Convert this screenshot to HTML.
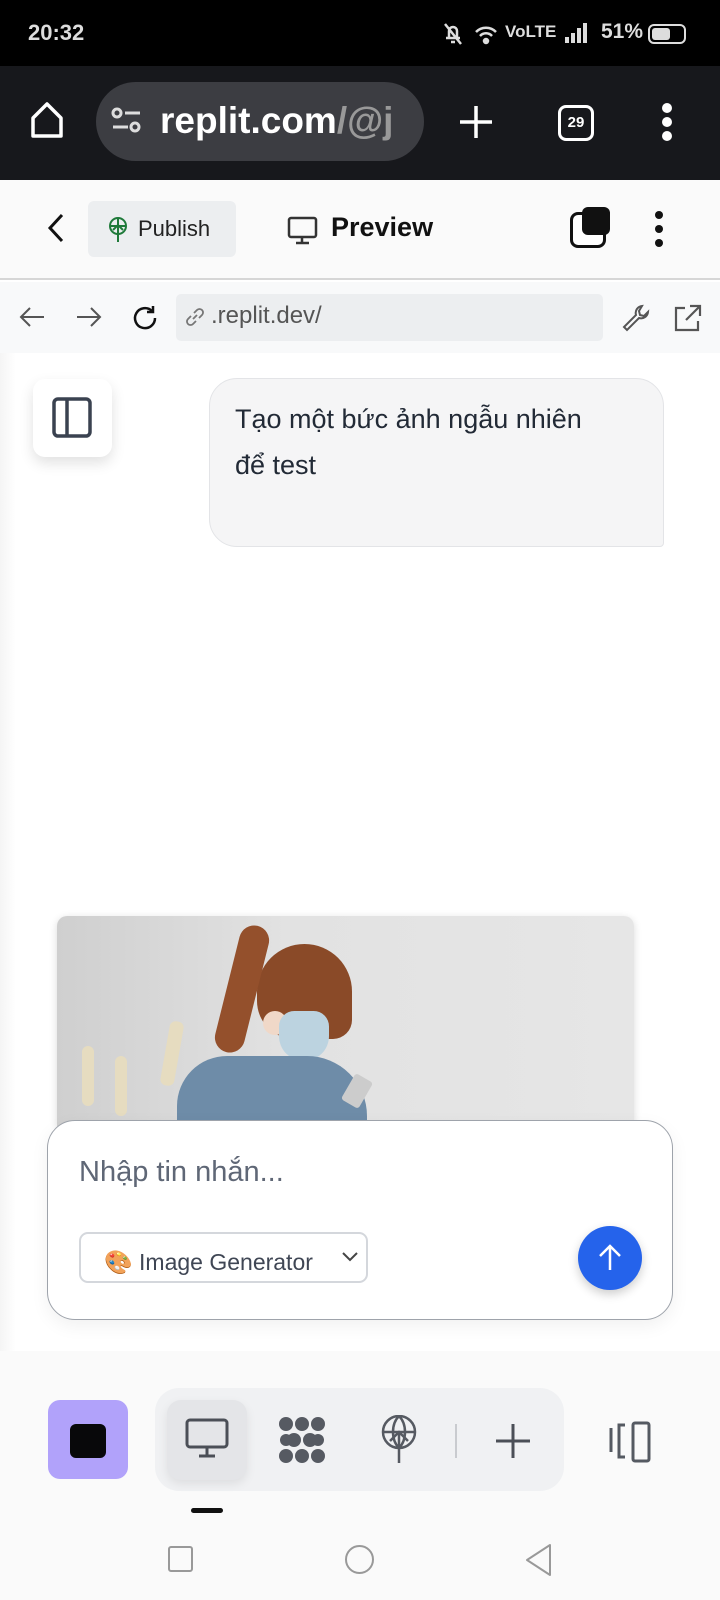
<!DOCTYPE html>
<html><head><meta charset="utf-8"><style>
*{margin:0;padding:0;box-sizing:border-box}
body{width:720px;height:1600px;position:relative;overflow:hidden;background:#fff;font-family:"Liberation Sans",sans-serif}
.a{position:absolute}
</style></head><body>
<!-- status bar -->
<div class="a" style="left:0;top:0;width:720px;height:66px;background:#000"></div>
<div class="a" style="left:28px;top:20px;color:#ddd;font-weight:bold;font-size:22px">20:32</div>
<div class="a" style="left:505px;top:22px;color:#ddd;font-weight:bold;font-size:17px">VoLTE</div>
<div class="a" style="left:601px;top:20px;color:#ddd;font-weight:bold;font-size:21px">51%</div>
<div class="a" style="left:648px;top:24px;width:38px;height:20px;border:2px solid #ddd;border-radius:6px"><div style="margin:2px;width:18px;height:12px;background:#ddd;border-radius:3px"></div></div>
<svg class="a" style="left:440px;top:20px" width="120" height="28" fill="none" stroke="#ddd" stroke-width="2.5"><path d="M6 18h14M9 18v-7a4 4 0 0 1 8 0v7M5 4l16 20M11 22h4"/><path d="M36 12a14 14 0 0 1 20 0M40 16a8 8 0 0 1 12 0"/><circle cx="46" cy="21" r="2" fill="#ddd"/></svg>
<svg class="a" style="left:565px;top:22px" width="30" height="22" fill="#ddd"><rect x="0" y="15" width="4" height="6"/><rect x="6" y="11" width="4" height="10"/><rect x="12" y="6" width="4" height="15"/><rect x="18" y="1" width="4" height="20"/></svg>
<!-- browser toolbar -->
<div class="a" style="left:0;top:66px;width:720px;height:114px;background:#17181c"></div>
<svg class="a" style="left:28px;top:100px" width="40" height="40" fill="none" stroke="#fff" stroke-width="3.5" stroke-linejoin="round"><path d="M5 18L19 4l14 14v18H5z"/></svg>
<div class="a" style="left:96px;top:82px;width:328px;height:79px;background:#3c3d42;border-radius:40px"></div>
<svg class="a" style="left:110px;top:106px" width="34" height="30" fill="none" stroke="#ddd" stroke-width="3"><circle cx="7" cy="7" r="4"/><path d="M15 7h15M3 21h15"/><circle cx="25" cy="21" r="4"/></svg>
<div class="a" style="left:160px;top:100px;color:#fff;font-weight:bold;font-size:37px;white-space:nowrap">replit.com<span style="color:#999">/@j</span></div>
<svg class="a" style="left:458px;top:104px" width="36" height="36" stroke="#fff" stroke-width="3.5"><path d="M18 2v32M2 18h32"/></svg>
<div class="a" style="left:558px;top:105px;width:36px;height:36px;border:3px solid #fff;border-radius:8px;color:#fff;font-size:15px;font-weight:bold;text-align:center;line-height:30px">29</div>
<svg class="a" style="left:660px;top:102px" width="14" height="40" fill="#fff"><circle cx="7" cy="6" r="5"/><circle cx="7" cy="20" r="5"/><circle cx="7" cy="34" r="5"/></svg>
<!-- publish bar -->
<div class="a" style="left:0;top:180px;width:720px;height:100px;background:#fafafa;border-bottom:2px solid #d6d6d6"></div>
<svg class="a" style="left:46px;top:212px" width="20" height="32" fill="none" stroke="#111" stroke-width="3"><path d="M16 3L4 16l12 13"/></svg>
<div class="a" style="left:88px;top:201px;width:148px;height:56px;background:#eceef0;border-radius:6px"></div>
<svg class="a" style="left:107px;top:216px" width="22" height="28" fill="none" stroke="#1f7a3a" stroke-width="2"><circle cx="11" cy="10" r="8"/><path d="M3 10h16M11 2v24M6 14l5-5 5 5"/></svg>
<div class="a" style="left:138px;top:216px;font-size:22px;color:#222">Publish</div>
<svg class="a" style="left:287px;top:216px" width="32" height="30" fill="none" stroke="#333" stroke-width="2.5"><rect x="2" y="2" width="27" height="19" rx="2"/><path d="M15 21v6M9 27h13"/></svg>
<div class="a" style="left:331px;top:212px;font-size:27px;color:#111;font-weight:bold">Preview</div>
<div class="a" style="left:570px;top:212px;width:36px;height:36px;border:3px solid #111;border-radius:8px;background:#fff"></div>
<div class="a" style="left:582px;top:207px;width:28px;height:28px;background:#111;border-radius:6px"></div>
<svg class="a" style="left:652px;top:210px" width="14" height="40" fill="#111"><circle cx="7" cy="5" r="4"/><circle cx="7" cy="19" r="4"/><circle cx="7" cy="33" r="4"/></svg>
<!-- browser row -->
<div class="a" style="left:0;top:282px;width:720px;height:71px;background:#f8f9fa"></div>
<svg class="a" style="left:18px;top:305px" width="28" height="24" fill="none" stroke="#555" stroke-width="2"><path d="M26 12H3M12 3l-9 9 9 9"/></svg>
<svg class="a" style="left:75px;top:305px" width="28" height="24" fill="none" stroke="#555" stroke-width="2"><path d="M2 12h23M16 3l9 9-9 9"/></svg>
<svg class="a" style="left:130px;top:303px" width="30" height="30" fill="none" stroke="#111" stroke-width="2.5"><path d="M25 15a10 10 0 1 1-3-7"/><path d="M23 3v6h-6"/></svg>
<div class="a" style="left:176px;top:294px;width:427px;height:47px;background:#eceef0;border-radius:5px"></div>
<svg class="a" style="left:183px;top:305px" width="24" height="24" fill="none" stroke="#777" stroke-width="1.8"><path d="M10 14l4-4M8 11l-3 3a3.5 3.5 0 0 0 5 5l3-3M16 13l3-3a3.5 3.5 0 0 0-5-5l-3 3"/></svg>
<div class="a" style="left:211px;top:302px;font-size:24px;color:#555">.replit.dev/</div>
<svg class="a" style="left:620px;top:302px" width="32" height="32" fill="none" stroke="#555" stroke-width="2"><path d="M22 4a7 7 0 0 0-6 9L4 25l3 3 12-12a7 7 0 0 0 9-6l-4 4-4-1-1-4z"/></svg>
<svg class="a" style="left:672px;top:302px" width="32" height="32" fill="none" stroke="#555" stroke-width="2.2"><path d="M13 6H4v22h22v-9M18 4h10v10M28 4L14 18"/></svg>
<!-- left shadow strip -->
<div class="a" style="left:0;top:353px;width:16px;height:998px;background:linear-gradient(90deg,#f5f5f5,#fff)"></div>
<!-- sidebar button -->
<div class="a" style="left:33px;top:379px;width:79px;height:78px;background:#fff;border-radius:12px;box-shadow:0 6px 14px rgba(0,0,0,.12)"></div>
<svg class="a" style="left:51px;top:396px" width="42" height="44" fill="none" stroke="#3a4250" stroke-width="3.5"><rect x="3" y="3" width="36" height="37" rx="4"/><path d="M16 3v37"/></svg>
<!-- bubble -->
<div class="a" style="left:209px;top:378px;width:455px;height:169px;background:#f5f5f6;border:1.5px solid #e3e4e7;border-radius:28px 28px 4px 28px"></div>
<div class="a" style="left:235px;top:396px;width:360px;font-size:27px;line-height:46px;color:#222a36">Tạo một bức ảnh ngẫu nhiên<br>để test</div>
<!-- image -->
<div class="a" style="left:57px;top:916px;width:577px;height:210px;border-radius:10px 10px 0 0;overflow:hidden;background:linear-gradient(90deg,#cfcfcf,#e2e2e2 40%,#e6e6e6);box-shadow:0 2px 8px rgba(0,0,0,.15)">
 <div class="a" style="left:200px;top:28px;width:95px;height:95px;background:#8a4a28;border-radius:50px 50px 20px 40px"></div>
 <div class="a" style="left:170px;top:8px;width:30px;height:130px;background:#94502c;border-radius:15px;transform:rotate(14deg)"></div>
 <div class="a" style="left:206px;top:95px;width:24px;height:24px;background:#f0d8c8;border-radius:50%"></div>
 <div class="a" style="left:222px;top:95px;width:50px;height:50px;background:#bcd3e0;border-radius:16px 16px 26px 26px"></div>
 <div class="a" style="left:120px;top:140px;width:190px;height:100px;background:#6e8ca8;border-radius:50px 60px 0 0"></div>
 <div class="a" style="left:290px;top:160px;width:20px;height:30px;background:#ccc;border-radius:3px;transform:rotate(30deg)"></div>
 <div class="a" style="left:25px;top:130px;width:12px;height:60px;background:#e6dcc0;border-radius:6px"></div>
 <div class="a" style="left:58px;top:140px;width:12px;height:60px;background:#e6dcc0;border-radius:6px"></div>
 <div class="a" style="left:108px;top:105px;width:14px;height:65px;background:#e6dcc0;border-radius:6px;transform:rotate(10deg)"></div>
</div>
<!-- input box -->
<div class="a" style="left:47px;top:1120px;width:626px;height:200px;background:#fff;border:1.5px solid #9ea3ab;border-radius:28px;box-shadow:0 6px 18px rgba(0,0,0,.06)"></div>
<div class="a" style="left:79px;top:1156px;font-size:29px;color:#5f6776">Nhập tin nhắn...</div>
<div class="a" style="left:79px;top:1232px;width:289px;height:51px;border:2px solid #d4d7dc;border-radius:9px;background:#fff"></div>
<div class="a" style="left:104px;top:1243px;font-size:23px;color:#3f4654;white-space:nowrap"><span style="font-family:'Noto Sans CJK JP',sans-serif">🎨</span> Image Generator</div>
<svg class="a" style="left:341px;top:1250px" width="18" height="14" fill="none" stroke="#444" stroke-width="2"><path d="M2 3l7 7 7-7"/></svg>
<div class="a" style="left:578px;top:1226px;width:64px;height:64px;border-radius:50%;background:#2563eb;box-shadow:0 4px 10px rgba(0,0,0,.2)"></div>
<svg class="a" style="left:596px;top:1243px" width="28" height="30" fill="none" stroke="#fff" stroke-width="2.5"><path d="M14 27V3M4 13L14 3l10 10"/></svg>
<!-- bottom bar -->
<div class="a" style="left:0;top:1351px;width:720px;height:249px;background:#fafafa"></div>
<div class="a" style="left:48px;top:1400px;width:80px;height:79px;background:#b1a2fa;border-radius:12px"></div>
<div class="a" style="left:70px;top:1424px;width:36px;height:34px;background:#08080a;border-radius:6px"></div>
<div class="a" style="left:155px;top:1388px;width:409px;height:103px;background:#f0f1f3;border-radius:24px"></div>
<div class="a" style="left:167px;top:1400px;width:80px;height:80px;background:#e4e5e8;border-radius:14px;box-shadow:0 4px 10px rgba(0,0,0,.08)"></div>
<svg class="a" style="left:185px;top:1418px" width="44" height="42" fill="none" stroke="#4b4f57" stroke-width="3"><rect x="2" y="2" width="40" height="27" rx="3"/><path d="M22 29v8M14 38h16"/></svg>
<svg class="a" style="left:278px;top:1416px" width="50" height="50" fill="#565a62"><circle cx="8" cy="8" r="7"/><circle cx="24" cy="8" r="7"/><circle cx="40" cy="8" r="7"/><circle cx="16" cy="24" r="7"/><circle cx="32" cy="24" r="7"/><circle cx="8" cy="24" r="6"/><circle cx="40" cy="24" r="6"/><circle cx="8" cy="40" r="7"/><circle cx="24" cy="40" r="7"/><circle cx="40" cy="40" r="7"/></svg>
<svg class="a" style="left:379px;top:1415px" width="40" height="50" fill="none" stroke="#565a62" stroke-width="2.5"><circle cx="20" cy="17" r="16"/><path d="M4 17h32M20 1c-8 8-8 24 0 32M20 1c8 8 8 24 0 32M20 16v32M11 26l9-9 9 9"/></svg>
<div class="a" style="left:455px;top:1424px;width:2px;height:34px;background:#c9cbcf"></div>
<svg class="a" style="left:494px;top:1422px" width="38" height="38" stroke="#4b4f57" stroke-width="3"><path d="M19 2v34M2 19h34"/></svg>
<svg class="a" style="left:608px;top:1420px" width="50" height="46" fill="none" stroke="#555a62" stroke-width="3"><path d="M3 8v24M17 5H11v32h6"/><rect x="25" y="3" width="16" height="38" rx="2"/></svg>
<div class="a" style="left:191px;top:1508px;width:32px;height:5px;background:#111;border-radius:3px"></div>
<!-- nav -->
<div class="a" style="left:168px;top:1546px;width:25px;height:26px;border:2px solid #999;border-radius:3px"></div>
<div class="a" style="left:345px;top:1545px;width:29px;height:29px;border:2px solid #999;border-radius:50%"></div>
<svg class="a" style="left:525px;top:1543px" width="30" height="34" fill="none" stroke="#999" stroke-width="2"><path d="M25 2v30L2 17z" stroke-linejoin="round"/></svg>
</body></html>
